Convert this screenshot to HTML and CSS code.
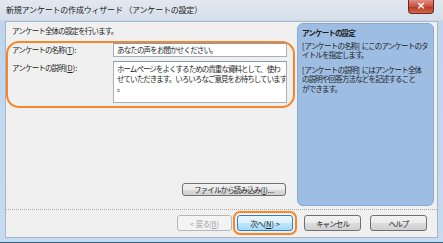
FILE: index.html
```html
<!DOCTYPE html>
<html lang="ja">
<head>
  <meta charset="UTF-8" />
  <title>新規アンケートの作成ウィザード</title>
  <link rel="stylesheet" href="styles.css">
</head>
<body>
  <div class="window">
    <div class="titlebar">
      <span class="title">新規アンケートの作成ウィザード （アンケートの設定）</span>
      <span class="close">×</span>
    </div>

    <div class="client">
      <div class="main">
        <div class="left">
          <div class="intro">アンケート全体の設定を行います。</div>

          <!-- highlighted input area -->
          <div class="mark">
            <div class="row">
              <label class="label">アンケートの名称<span class="lat">(<u>T</u>):</span></label>
              <div class="input">あなたの声をお聞かせください。</div>
            </div>
            <div class="row">
              <label class="label">アンケートの説明<span class="lat">(<u>D</u>):</span></label>
              <div class="input area">ホームページをよくするための貴重な資料として、使わ<br>せていただきます。いろいろなご意見をお待ちしています<br>。</div>
            </div>
          </div>

          <div class="file-row">
            <button class="btn file">ファイルから読み込み<span class="lat">(<u>I</u>)...</span></button>
          </div>
        </div>

        <div class="info">
          <div class="info-title">アンケートの設定</div>
          <p><span class="lat">[</span>アンケートの名称<span class="lat">] </span>にこのアンケートのタ<br>イトルを指定します。</p>
          <p><span class="lat">[</span>アンケートの説明<span class="lat">] </span>にはアンケート全体<br>の説明や回答方法などを記述すること<br>ができます。</p>
        </div>
      </div>

      <div class="footer">
        <button class="btn back" disabled><span class="lat">&lt; </span>戻る<span class="lat">(<u>B</u>)</span></button>
        <button class="btn next">次へ<span class="lat">(<u>N</u>) &gt;</span></button>
        <button class="btn cancel">キャンセル</button>
        <button class="btn help">ヘルプ</button>
      </div>
    </div>
  </div>
</body>
</html>
```

FILE: styles.css
```css
body {
  margin: 0;
  width: 443px;
  height: 243px;
  overflow: hidden;
  font-family: "Noto Sans CJK JP", "Noto Sans", sans-serif;
  font-size: 7.5px;
  letter-spacing: -0.85px;
  color: #1e1e1e;
}

.lat {
  letter-spacing: 0;
}

.window {
  height: 242px;
  display: flex;
  flex-direction: column;
  background: linear-gradient(to bottom, #e2e8ef 0, #d5dfea 20px, #bfd5ee 21px, #c6dbf1 100%);
  border-bottom: 1px solid #2f6073;
}

.titlebar {
  height: 21px;
  display: flex;
  justify-content: space-between;
  align-items: flex-start;
  padding-left: 6px;
  padding-right: 9px;
}

.title {
  margin-top: 4px;
  font-size: 8px;
  letter-spacing: -0.2px;
  line-height: 12px;
  color: #202020;
}

.close {
  width: 26px;
  height: 14px;
  box-sizing: border-box;
  background: linear-gradient(to bottom, #e08e80 0, #c9513f 50%, #b7321f 51%, #cf6b50 100%);
  border: 1px solid #6d2a22;
  border-top: none;
  border-radius: 0 0 4px 4px;
  color: #fff;
  font-family: "DejaVu Sans", sans-serif;
  font-weight: bold;
  font-size: 11px;
  letter-spacing: 0;
  line-height: 12px;
  text-align: center;
}

.client {
  flex: 1;
  margin: 0 5px 4px 5px;
  background: #f0f0f0;
  border: 1px solid #a7b6c8;
  display: flex;
  flex-direction: column;
}

.main {
  height: 187px;
  display: flex;
}

.left {
  flex: 1;
  display: flex;
  flex-direction: column;
}

.intro {
  margin: 3px 0 0 6px;
  line-height: 12px;
}

.mark {
  margin-top: 4px;
  width: 289px;
  box-sizing: border-box;
  border: 2px solid #f7862a;
  border-radius: 13px;
  padding: 0 6px 3px 4px;
  display: flex;
  flex-direction: column;
  gap: 4px;
}

.row {
  display: flex;
  align-items: flex-start;
}

.label {
  width: 101px;
  line-height: 14px;
}

.input {
  width: 174px;
  height: 14px;
  box-sizing: border-box;
  background: #fff;
  border: 1px solid #abadb3;
  border-top-color: #7f9db9;
  padding: 0 3px;
  line-height: 12px;
  white-space: nowrap;
  overflow: hidden;
}

.input.area {
  height: 42px;
  line-height: 9.5px;
  padding: 2px 2px 0 3px;
  letter-spacing: -0.95px;
}

.file-row {
  flex: 1;
  display: flex;
  justify-content: flex-end;
  align-items: flex-end;
  padding: 0 11px 13px 0;
}

.btn {
  height: 16px;
  box-sizing: border-box;
  font-family: inherit;
  font-size: 7.5px;
  letter-spacing: -0.85px;
  color: #1e1e1e;
  padding: 0;
  border: 1px solid #707070;
  border-radius: 3px;
  background: linear-gradient(to bottom, #f2f2f2 0, #ebebeb 50%, #dddddd 51%, #cfcfcf 100%);
  line-height: 13px;
}

.file {
  width: 104px;
  height: 13px;
  line-height: 11px;
}

.info {
  width: 137px;
  height: 183px;
  box-sizing: border-box;
  margin: 1px 3px 0 0;
  background: #9ebde3;
  border: 1px solid #8aaad2;
  border-radius: 6px;
  padding: 4px 2px 4px 4px;
  line-height: 9.5px;
  white-space: nowrap;
}

.info-title {
  font-weight: bold;
  margin-bottom: 3px;
}

.info p {
  margin: 0 0 5px 0;
}

.footer {
  flex: 1;
  border-top: 1px dotted #a8a8a8;
  display: flex;
  align-items: flex-start;
  padding: 5px 0 0 171px;
}

.back {
  width: 55px;
  border-color: #b5b8bb;
  background: #f4f4f4;
  color: #a3a3a3;
}

.next {
  width: 56px;
  margin-left: 5px;
  border-color: #3c7fb1;
  background: linear-gradient(to bottom, #eaf6fd 0, #d9f0fc 50%, #bee6fd 51%, #a7d9f5 100%);
  outline: 2px solid #f7862a;
  outline-offset: 2px;
}

.cancel {
  width: 57px;
  margin-left: 11px;
}

.help {
  width: 57px;
  margin-left: 9px;
}
```
